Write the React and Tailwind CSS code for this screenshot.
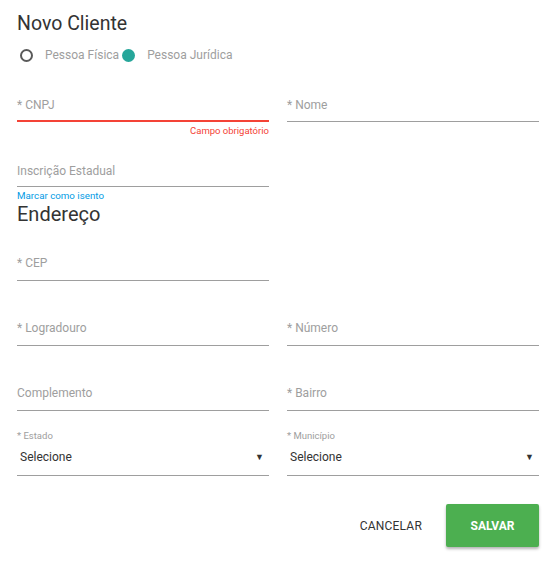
import React from "react";

const Field = ({ label, h, error, pb = "pb-[9px]" }) => (
  <div
    className={`flex items-end text-[12px] leading-[16px] text-[#9e9e9e] ${pb} ${h} ${
      error ? "border-b-2 border-[#f44336]" : "border-b border-[#9e9e9e]"
    }`}
  >
    {label}
  </div>
);

const Select = ({ label }) => (
  <div className="h-[65px] flex flex-col justify-end border-b border-[#9e9e9e]">
    <div className="text-[9.5px] leading-[12px] text-[#9e9e9e]">{label}</div>
    <div className="mt-[7px] mb-[10px] flex items-center justify-between pl-[3px] pr-[5px] text-[12px] leading-[16px] text-[#333]">
      <span>Selecione</span>
      <span className="text-[9px]">▼</span>
    </div>
  </div>
);

export default function App() {
  return (
    <div className="bg-white min-h-[567px] px-[17px] pr-[18px] font-['Roboto',sans-serif]">
      <h1 className="pt-[12px] text-[19.5px] leading-[24px] text-[#333]">Novo Cliente</h1>

      <div className="mt-[9px] h-[20px] flex items-center text-[12px] text-[#9e9e9e]">
        <span className="ml-[3px] w-[13px] h-[13px] rounded-full border-2 border-[#5a5a5a]" />
        <span className="ml-[12px]">Pessoa Física</span>
        <span className="ml-[3px] w-[13px] h-[13px] rounded-full bg-[#26a69a]" />
        <span className="ml-[12px]">Pessoa Jurídica</span>
      </div>

      <div className="grid grid-cols-2 gap-x-[18px]">
        <div>
          <Field label="* CNPJ" h="h-[57px]" pb="pb-[7px]" error />
          <div className="h-[18px] pt-[3px] text-right text-[9.5px] leading-[12px] text-[#f44336]">
            Campo obrigatório
          </div>
        </div>
        <div>
          <Field label="* Nome" h="h-[57px]" pb="pb-[8px]" />
        </div>

        <div>
          <Field label="Inscrição Estadual" h="h-[47px]" pb="pb-[7px]" />
          <div className="mt-[3px] text-[9.75px] leading-[12px] text-[#039be5]">Marcar como isento</div>
        </div>
        <div />
      </div>

      <h2 className="text-[20px] leading-[24px] text-[#333]">Endereço</h2>

      <div className="grid grid-cols-2 gap-x-[18px]">
        <Field label="* CEP" h="h-[55px]" />
        <div />
        <Field label="* Logradouro" h="h-[65px]" />
        <Field label="* Número" h="h-[65px]" />
        <Field label="Complemento" h="h-[65px]" />
        <Field label="* Bairro" h="h-[65px]" />
        <Select label="* Estado" />
        <Select label="* Município" />
      </div>

      <div className="mt-[28px] flex items-center justify-end gap-[24px]">
        <button className="text-[12px] text-[#333] tracking-[0.2px]">CANCELAR</button>
        <button className="w-[93px] h-[43px] rounded-[2px] bg-[#4caf50] text-white text-[12px] font-bold shadow-[0_2px_3px_rgba(0,0,0,0.3)]">
          SALVAR
        </button>
      </div>
    </div>
  );
}
